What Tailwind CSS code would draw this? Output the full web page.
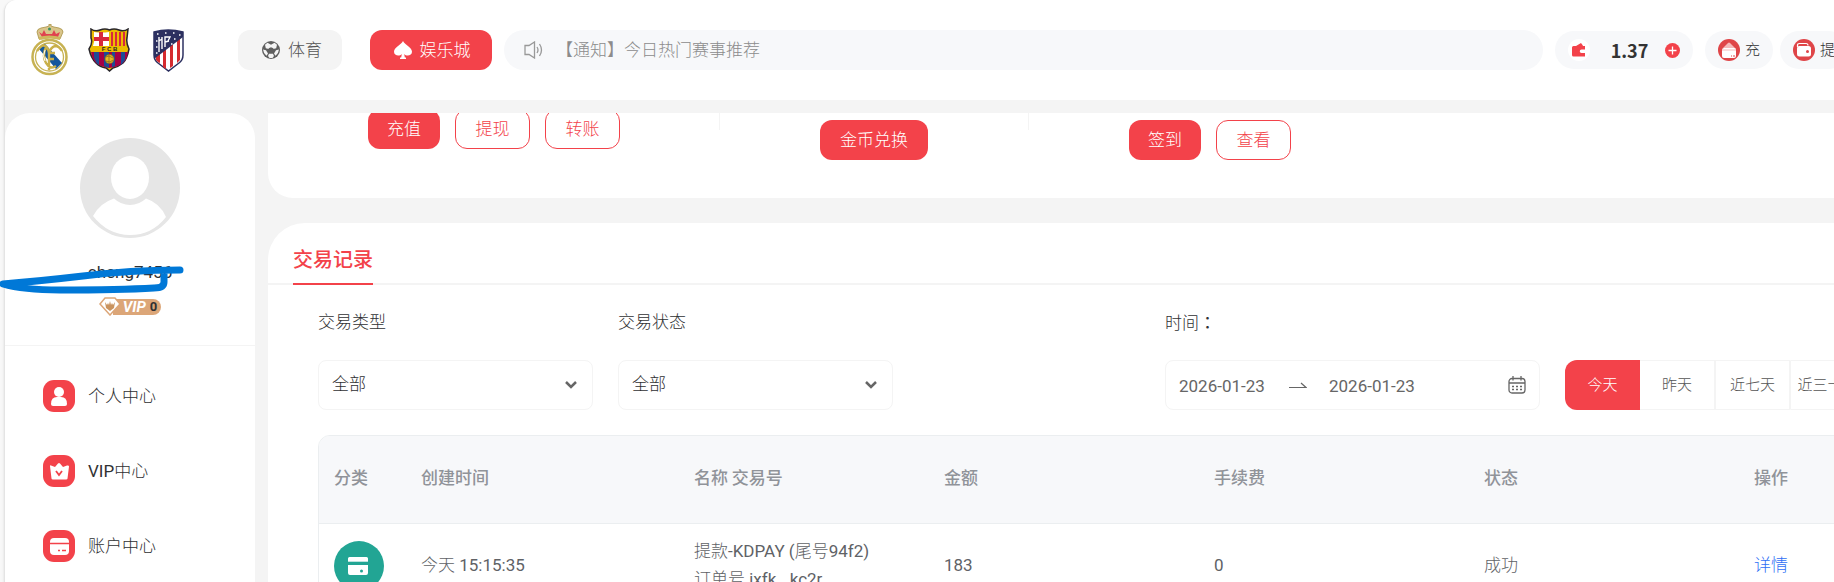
<!DOCTYPE html>
<html lang="zh-CN">
<head>
  <meta charset="UTF-8">
  <meta name="viewport" content="width=device-width, initial-scale=1.0">
  <title>个人中心</title>
  <script src="https://cdn.jsdelivr.net/npm/@tailwindcss/browser@4"></script>
</head>
<body class="bg-[#f8f8f8] h-screen overflow-hidden pl-1 text-[17px] leading-6 text-[#303133] font-['Roboto','Noto_Sans_CJK_SC_Light','Noto_Sans_CJK_SC',sans-serif]">
  <div class="min-w-[1920px] h-full flex flex-col bg-[#f4f4f4] border-l border-[#e4e4e4] rounded-tl-xl overflow-hidden shadow">

    <!-- Header -->
    <header class="h-[100px] shrink-0 bg-white flex items-center pl-[26px] pr-[76px]">
      <a href="#" aria-label="Real Madrid" class="mr-5">
        <svg width="37" height="52" viewBox="0 0 37 52">
          <path d="M8 15 6 8q0-3 4-4l5-1 3-1V0h2v2l3 1 5 1q4 1 4 4l-3 7q-9-3-18 0z" fill="#d9c58a" stroke="#a89245" stroke-width=".8"/>
          <path d="m8 8 3 2 2-4 2 4h6l2-4 2 4 4-2-2 5q-8-2-16 0z" fill="#e0414f"/>
          <circle cx="18.500" cy="5" r="1.500" fill="#3d8f5f"/>
          <path d="M8 13q10-3 21 0v3q-11-3-21 0z" fill="#cfb75c"/>
          <circle cx="18.500" cy="33" r="17" fill="#fff" stroke="#c7b253" stroke-width="2.500"/>
          <circle cx="18.500" cy="33" r="14" fill="#fff" stroke="#c7b253" stroke-width="1.300"/>
          <path d="m8 25 6-5 17 19-6 6z" fill="#14569c"/>
          <path d="M6 27q5-7 8-5 3 1 4 7 2-6 6-7 4 0 7 5M15 23q-4 9 0 16t10 3M18 29v17m0-17h6m-6 6h5" fill="none" stroke="#c9b04a" stroke-width="2.400"/>
          <path d="M14 26q-3 6 0 11" fill="none" stroke="#fff" stroke-width="1"/>
        </svg>
      </a>
      <a href="#" aria-label="FC Barcelona" class="mr-[22px]">
        <svg width="43" height="44" viewBox="0 0 43 44">
          <path d="M3 1q4 3 9 1 5-2 9.500 0 4.500-2 9.500 0 5 2 9-1l-1 9q-1 5 2 11-2 10-6 14-5 4-10 5l-3.500 3-3.500-3q-6-1-10-5-5-5-7-14 4-6 2-11z" fill="#edbb00" stroke="#28262b" stroke-width="1.500"/>
          <path d="M6 4q8 1 15 0v14H5q2-5 1-9z" fill="#fff"/>
          <path d="M11 4h4v5h6v4h-6v5h-4v-5H6V9h5z" fill="#d8283d"/>
          <path d="M24 4v14m4-14v14m4-14v14m4-14v14" stroke="#d8283d" stroke-width="2"/>
          <path d="M3 24h37q-1 8-5 11-5 4-13.500 5Q13 39 8 35q-4-4-5-11z" fill="#a50044"/>
          <path d="M6 24h5v13q-4-3-5-8zm10 0h5v16l-5-2zm11 0h-3v15l3-1zm6 0h4v8l-4 5z" fill="#1d4b94"/>
          <circle cx="21.500" cy="31" r="4.500" fill="#e9bd21" stroke="#80601c" stroke-width=".7"/>
          <path d="m18 29 3-1 4 2m-7 3 4 1 3-2m-4-5v8" stroke="#80601c" stroke-width=".7" fill="none"/>
          <text x="21.500" y="23" text-anchor="middle" font-family="Liberation Sans" font-size="6" font-weight="700" fill="#28262b" xml:space="preserve">F C B</text>
        </svg>
      </a>
      <a href="#" aria-label="Atlético de Madrid" class="mr-[54px]">
        <svg width="31" height="43" viewBox="0 0 31 43">
          <path d="M1 3q14-4 29 0v23q0 5-4 8L15.500 42 5 34q-4-3-4-8z" fill="#fff" stroke="#2c3060" stroke-width="1.500"/>
          <path d="M3 27v4l2 2 2 1V23zm7-6v17l3 2V19zm7-5v23l3-2V13zm7-5v23l3-3V9z" fill="#d52b2f"/>
          <path d="M1 3q14-4 29 0v5L1 30z" fill="#2c3060"/>
          <path d="M6 8v15m3-15v12m-3-8 3-2m3 8V8h5l-2 4m-3 1 4-1" stroke="#fff" stroke-width="1.400" fill="none"/>
          <path d="M4 5h1.500M12 4h1.500M20 4h1.500M26 6h1.500M3 12h1.500M3 18h1.500M18 15h1.500M21 10h1.500M3 24h1.500" stroke="#fff" stroke-width="1.500"/>
        </svg>
      </a>

      <button class="w-[104px] h-10 mr-7 pl-1 rounded-xl bg-[#f4f4f4] text-[#555] flex items-center justify-center gap-2">
        <svg width="18" height="18" viewBox="0 0 18 18">
          <circle cx="9" cy="9" r="9" fill="#5f5f5f"/>
          <path d="m9 3.800 3.500-2 2.500 2-.8 3.500-3 .8L9 6.500zM9 3.800l-3.500-2L3 3.800l.8 3.500 3 .8L9 6.500zM1 8.500l3 .8 2 3.200-1.500 2.200q-3-2-3.500-6.200zm16 0-3 .8-2 3.200 1.500 2.200q3-2 3.500-6.200zM7 12.700h4l1 2.300-1.500 2h-3L6 15z" fill="#f4f4f4"/>
          <circle cx="9" cy="9.300" r="2.800" fill="#5f5f5f"/>
        </svg>
        体育
      </button>
      <button class="w-[122px] h-10 mr-3 pl-0.5 rounded-xl bg-[#f3424a] text-white flex items-center justify-center gap-2">
        <svg width="18" height="18" viewBox="0 0 18 18" fill="#fff"><path d="M9 0c2 4 9 6.500 9 10.800 0 4-5.500 5-7.800 2.200l.6 3.500H12V18H6v-1.500h1.200l.6-3.500C5.500 15.800 0 14.800 0 10.800 0 6.500 7 4 9 0z"/></svg>
        娱乐城
      </button>

      <div class="flex-1 h-10 mr-3 px-5 rounded-full bg-[#f7f8fa] text-[#8c8c8c] flex items-center gap-3">
        <svg width="20" height="18" viewBox="0 0 20 18" fill="none" stroke="#999" stroke-width="1.300"><path d="M1 4.500h4L10.500 1v16L5 13.500H1zM13 6q2 3 0 6m2.500-9q4 6 0 12"/></svg>
        <p>【通知】今日热门赛事推荐</p>
      </div>

      <div class="w-[138px] h-[38px] mr-3 px-[13px] rounded-full bg-[#f7f8fa] flex items-center justify-between">
        <span class="size-[22px] rounded-full bg-white flex items-center justify-center">
          <svg width="14" height="14" viewBox="0 0 14 14" fill="#f3424a"><path d="m4 3 5-3 1.500 2 .5 1h2v3.500H9.500a1.700 1.700 0 0 0 0 3.500H13v3.500H1.500Q0 13.500 0 12V4.500Q0 3 1.500 3z"/></svg>
        </span>
        <span class="text-lg font-bold text-[#333] font-['Noto_Sans_CJK_SC',sans-serif] pl-1">1.37</span>
        <button aria-label="充值" class="size-[15px] rounded-full bg-[#f3424a]">
          <svg width="15" height="15" viewBox="0 0 15 15" stroke="#fff" stroke-width="1.300"><path d="M7.500 3.500v8m-4-4h8"/></svg>
        </button>
      </div>
      <button class="w-[68px] h-[38px] mr-[7px] px-[13px] rounded-full bg-[#f7f8fa] flex items-center gap-[5px] text-[15px]">
        <svg class="shrink-0" width="22" height="22" viewBox="0 0 22 22">
          <circle cx="11" cy="11" r="11" fill="#df4548"/>
          <path d="m5 9 5-5q1-1 2 0l4 4 2 2z" fill="#f5b9ba"/>
          <rect x="4" y="9" width="14" height="10" rx="2" fill="#fff"/>
          <path d="M4 11h14" stroke="#f5b9ba"/>
          <path d="M13 17h1m1 0h2" stroke="#df4548"/>
        </svg>
        充
      </button>
      <button class="w-[68px] h-[38px] px-[13px] rounded-full bg-[#f7f8fa] flex items-center gap-[5px] text-[15px]">
        <svg class="shrink-0" width="22" height="22" viewBox="0 0 22 22">
          <circle cx="11" cy="11" r="11" fill="#df4548"/>
          <path d="M4.500 8V6.500q0-2 2-2H13q2 0 2 2" fill="none" stroke="#fff" stroke-width="1.200"/>
          <rect x="4" y="7" width="14" height="10.500" rx="2.500" fill="#fff"/>
          <circle cx="14.500" cy="12.500" r="1.500" fill="#df4548"/>
        </svg>
        提
      </button>
    </header>

    <div class="flex-1 min-h-0 flex gap-[13px] pt-[13px]">
      <!-- Sidebar -->
      <aside class="w-[250px] shrink-0 bg-white rounded-t-[25px] overflow-hidden">
        <div class="h-[233px] pt-[25px] border-b border-[#f4f4f4] flex flex-col items-center">
          <svg width="100" height="100" viewBox="0 0 100 100">
            <circle cx="50" cy="50" r="50" fill="#e6e6e6"/>
            <ellipse cx="50" cy="39.500" rx="19" ry="21.500" fill="#fff"/>
            <path d="M34 60.500Q20 65 13 78q15 19 37 19t36-18Q80 65 66 60.500 59 67 50 67t-16-6.500z" fill="#fff"/>
          </svg>
          <p class="mt-[22px]">cheng7456</p>
          <div class="mt-[13px] flex items-center">
            <svg class="relative z-10" width="22" height="19" viewBox="0 0 22 19">
              <path d="M6 1h10l5 6-10 11L1 7z" fill="#fff" stroke="#dca678" stroke-width="1.500"/>
              <path d="m6 5 2 3 1-2 1 2 1-4 1 4 1-2 1 2 2-3-1 6-4 3-4-3z" fill="#c9935f"/>
            </svg>
            <span class="-ml-2 h-4 pl-2.5 pr-1 rounded-r-full bg-[#dca678] flex items-center gap-1 font-bold leading-4">
              <span class="text-[15px] italic text-white">VIP</span>
              <span class="text-[13px]">0</span>
            </span>
          </div>
        </div>
        <nav class="pt-3">
          <a href="#" class="h-[75px] pl-[38px] flex items-center gap-[13px]">
            <svg width="32" height="32" viewBox="0 0 32 32">
              <rect width="32" height="32" rx="11" fill="#f3424a"/>
              <circle cx="16" cy="12" r="5" fill="#fff"/>
              <path d="M8 24q0-7 6-7h4q6 0 6 7 0 2-2 2H10q-2 0-2-2z" fill="#fff"/>
            </svg>
            个人中心
          </a>
          <a href="#" class="h-[75px] pl-[38px] flex items-center gap-[13px]">
            <svg width="32" height="32" viewBox="0 0 32 32">
              <rect width="32" height="32" rx="11" fill="#f3424a"/>
              <path d="M7 11q0-1 1-.5l4 1.500 3-3.500q1-1 2 0l3 3.500 4-1.500q2-.5 2 1l-1.500 12q0 1-1.500 1H10q-1.500 0-1.500-1z" fill="#fff"/>
              <path d="m13 16 3 4 3-4" fill="none" stroke="#f3424a" stroke-width="1.800"/>
            </svg>
            VIP中心
          </a>
          <a href="#" class="h-[75px] pl-[38px] flex items-center gap-[13px]">
            <svg width="32" height="32" viewBox="0 0 32 32">
              <rect width="32" height="32" rx="11" fill="#f3424a"/>
              <rect x="7" y="8" width="19" height="17" rx="4" fill="#fff"/>
              <path d="M7 13.500h19M15 20.500h2m2 0h4" stroke="#f3424a" stroke-width="1.300"/>
            </svg>
            账户中心
          </a>
        </nav>
      </aside>

      <main class="flex-1 min-w-0 overflow-hidden">
        <!-- Account actions, partly scrolled under the header -->
        <section class="-mt-1 h-[89px] bg-white rounded-b-[25px] flex">
          <div class="w-[451px] pl-[100px] flex gap-[15px]">
            <button class="w-[72px] h-10 rounded-xl bg-[#f3424a] text-white">充值</button>
            <button class="w-[75px] h-10 rounded-xl border border-[#f3424a] text-[#f3424a]">提现</button>
            <button class="w-[75px] h-10 rounded-xl border border-[#f3424a] text-[#f3424a]">转账</button>
          </div>
          <div class="h-[21px] border-l border-[#f4f4f4]"></div>
          <div class="w-[308px] pt-[11px] flex justify-center">
            <button class="w-[108px] h-10 rounded-xl bg-[#f3424a] text-white">金币兑换</button>
          </div>
          <div class="h-[21px] border-l border-[#f4f4f4]"></div>
          <div class="w-[362px] pt-[11px] flex justify-center gap-[15px]">
            <button class="w-[72px] h-10 rounded-xl bg-[#f3424a] text-white">签到</button>
            <button class="w-[75px] h-10 rounded-xl border border-[#f3424a] text-[#f3424a]">查看</button>
          </div>
        </section>

        <!-- Transaction records -->
        <section class="mt-[25px] bg-white rounded-tl-[37px] pb-6">
          <div class="h-[62px] px-[25px] border-b-2 border-[#f4f4f4] flex">
            <h2 class="-mb-0.5 pt-6 border-b-2 border-[#f3424a] text-xl leading-6 font-medium text-[#f3424a] font-['Noto_Sans_CJK_SC',sans-serif]">交易记录</h2>
          </div>

          <div class="px-[50px] pt-[25px]">
            <form class="flex items-end">
              <div class="w-[275px] mr-[25px]">
                <label for="type" class="block h-6 mb-[26px]">交易类型</label>
                <div class="relative">
                  <select id="type" class="w-full h-[50px] px-[13px] pb-0.5 appearance-none rounded-lg border border-[#f4f4f4] bg-white">
                    <option>全部</option>
                  </select>
                  <svg class="absolute right-4 top-5 pointer-events-none" width="12" height="10" viewBox="0 0 12 10" fill="none" stroke="#666" stroke-width="2.500"><path d="m1 2 5 5 5-5"/></svg>
                </div>
              </div>
              <div class="w-[275px]">
                <label for="status" class="block h-6 mb-[26px]">交易状态</label>
                <div class="relative">
                  <select id="status" class="w-full h-[50px] px-[13px] pb-0.5 appearance-none rounded-lg border border-[#f4f4f4] bg-white">
                    <option>全部</option>
                  </select>
                  <svg class="absolute right-4 top-5 pointer-events-none" width="12" height="10" viewBox="0 0 12 10" fill="none" stroke="#666" stroke-width="2.500"><path d="m1 2 5 5 5-5"/></svg>
                </div>
              </div>
              <div class="ml-[272px] w-[375px]">
                <label for="from" class="block h-6 mb-[26px]">时间<span class="font-['Noto_Sans_CJK_TC',sans-serif]" lang="zh-TW">：</span></label>
                <div class="h-[50px] px-[13px] rounded-lg border border-[#f4f4f4] flex items-center text-[#666]">
                  <input id="from" type="text" value="2026-01-23" class="w-[110px] pt-0.5 outline-none">
                  <svg width="18" height="7" viewBox="0 0 18 7" fill="none" stroke="#666" stroke-width="1.200"><path d="M0 5.500h17L12 1"/></svg>
                  <input type="text" value="2026-01-23" aria-label="结束日期" class="ml-[22px] w-[110px] pt-0.5 outline-none">
                  <svg class="ml-auto" width="18" height="18" viewBox="0 0 18 18" fill="none" stroke="#666" stroke-width="1.300">
                    <rect x="1" y="2.500" width="16" height="14.500" rx="3"/>
                    <path d="M1 7h16M5 0v4.500M13 0v4.500"/>
                    <path d="M4 10.500h10M4 13.500h10" stroke-width="1.600" stroke-dasharray="2 2"/>
                  </svg>
                </div>
              </div>
              <div class="ml-[25px] flex h-[50px] text-[15px] text-[#555]">
                <button type="button" class="w-[75px] rounded-l-xl bg-[#f3424a] text-white">今天</button>
                <button type="button" class="w-[75px] border border-l-0 border-[#f4f4f4]">昨天</button>
                <button type="button" class="w-[75px] border border-[#f4f4f4]">近七天</button>
                <button type="button" class="w-[75px] rounded-r-xl border border-[#f4f4f4]">近三十天</button>
              </div>
            </form>

            <div class="mt-[25px] border border-[#ebeef0] rounded-xl overflow-hidden">
              <table class="w-full table-fixed text-left text-[#606266]">
                <thead class="bg-[#f7f8fa] text-[#909399] font-['Noto_Sans_CJK_SC',sans-serif]">
                  <tr class="h-[87px] border-b border-[#ebeef0]">
                    <th class="w-[87px] pl-[15px] pb-1 font-medium">分类</th>
                    <th class="w-[273px] pl-[15px] pb-1 font-medium">创建时间</th>
                    <th class="w-[250px] pl-[15px] pb-1 font-medium">名称 交易号</th>
                    <th class="w-[270px] pl-[15px] pb-1 font-medium">金额</th>
                    <th class="w-[270px] pl-[15px] pb-1 font-medium">手续费</th>
                    <th class="w-[270px] pl-[15px] pb-1 font-medium">状态</th>
                    <th class="pl-[15px] pb-1 font-medium">操作</th>
                  </tr>
                </thead>
                <tbody>
                  <tr class="h-[86px]">
                    <td class="pl-[15px]">
                      <svg width="50" height="50" viewBox="0 0 50 50">
                        <circle cx="25" cy="25" r="25" fill="#22a594"/>
                        <path d="M14 20v-2.500q0-1.500 1.500-1.500h17q1.500 0 1.500 1.500V20zM14 24h20v8q0 2-2 2H16q-2 0-2-2z" fill="#fff"/>
                        <path d="M14 20.500h20" stroke="#bce3de"/>
                        <circle cx="27.500" cy="30" r="1.500" fill="#22a594"/>
                      </svg>
                    </td>
                    <td class="pl-[15px] pb-0.5">今天 15:15:35</td>
                    <td class="pl-[15px] pb-0.5 leading-7">提款-KDPAY (尾号94f2)<br>订单号 jxfk...kc2r</td>
                    <td class="pl-[15px] pb-0.5">183</td>
                    <td class="pl-[15px] pb-0.5">0</td>
                    <td class="pl-[15px] pb-0.5">成功</td>
                    <td class="pl-[15px] pb-0.5"><a href="#" class="text-[#2f6ff5]">详情</a></td>
                  </tr>
                </tbody>
              </table>
            </div>
          </div>
        </section>
      </main>
    </div>
  </div>

  <!-- Marker stroke over the user name -->
  <svg class="absolute left-0 top-64 pointer-events-none" width="190" height="44" viewBox="0 0 190 44" fill="none" stroke="#0078d7" stroke-width="7" stroke-linecap="round" stroke-linejoin="round">
    <path d="M180 14Q130 14 83 20 40 25 3 28q20 6 57 6 60 0 94-2 10 0 10-6V17"/>
  </svg>
</body>
</html>
